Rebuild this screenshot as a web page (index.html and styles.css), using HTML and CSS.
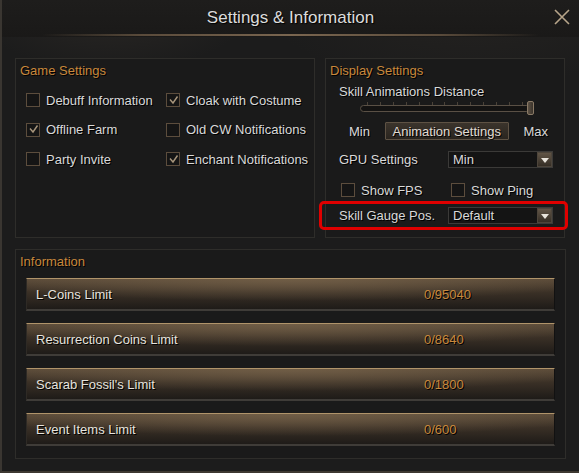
FILE: index.html
```html
<!DOCTYPE html>
<html>
<head>
<meta charset="utf-8">
<link rel="stylesheet" href="styles.css">
</head>
<body>
<div class="window">
  <header class="titlebar">
    <h1 class="title">Settings &amp; Information</h1>
    <svg class="close" width="16" height="16" viewBox="0 0 16 16"><path d="M1 1L15 15M15 1L1 15" stroke="#b7a58a" stroke-width="1.6"/></svg>
  </header>
  <main class="content">
    <div class="toprow">
      <section class="panel game">
        <h2 class="phead">Game Settings</h2>
        <div class="checks">
          <label class="cb"><span class="box"></span>Debuff Information</label>
          <label class="cb"><span class="box on"><svg width="11" height="11" viewBox="0 0 11 11"><path d="M2 4.5L5 8L9.5 1.5" fill="none" stroke="#a8967c" stroke-width="1.4"/></svg></span>Cloak with Costume</label>
          <label class="cb"><span class="box on"><svg width="11" height="11" viewBox="0 0 11 11"><path d="M2 4.5L5 8L9.5 1.5" fill="none" stroke="#a8967c" stroke-width="1.4"/></svg></span>Offline Farm</label>
          <label class="cb"><span class="box"></span>Old CW Notifications</label>
          <label class="cb"><span class="box"></span>Party Invite</label>
          <label class="cb"><span class="box on"><svg width="11" height="11" viewBox="0 0 11 11"><path d="M2 4.5L5 8L9.5 1.5" fill="none" stroke="#a8967c" stroke-width="1.4"/></svg></span>Enchant Notifications</label>
        </div>
      </section>
      <section class="panel display">
        <h2 class="phead">Display Settings</h2>
        <div class="dbody">
          <div class="lbl">Skill Animations Distance</div>
          <div class="slider">
            <div class="track">
              <span class="tick"></span><span class="tick"></span><span class="tick"></span><span class="tick"></span><span class="tick"></span><span class="tick"></span><span class="tick"></span><span class="tick"></span><span class="tick"></span><span class="tick"></span><span class="tick"></span><span class="tick"></span><span class="tick"></span>
            </div>
            <span class="thumb"></span>
          </div>
          <div class="minmax">
            <span>Min</span>
            <button class="btn">Animation Settings</button>
            <span>Max</span>
          </div>
          <div class="row gpu">
            <span class="lbl">GPU Settings</span>
            <div class="select"><span>Min</span><span class="arrow"></span></div>
          </div>
          <div class="row checks2">
            <label class="cb"><span class="box"></span>Show FPS</label>
            <label class="cb"><span class="box"></span>Show Ping</label>
          </div>
          <div class="row highlight">
            <span class="lbl">Skill Gauge Pos.</span>
            <div class="select"><span>Default</span><span class="arrow"></span></div>
          </div>
        </div>
      </section>
    </div>
    <section class="panel info">
      <h2 class="phead">Information</h2>
      <div class="bars">
        <div class="bar"><span class="bname">L-Coins Limit</span><span class="bval">0/95040</span></div>
        <div class="bar"><span class="bname">Resurrection Coins Limit</span><span class="bval">0/8640</span></div>
        <div class="bar"><span class="bname">Scarab Fossil's Limit</span><span class="bval">0/1800</span></div>
        <div class="bar"><span class="bname">Event Items Limit</span><span class="bval">0/600</span></div>
      </div>
    </section>
  </main>
</div>
</body>
</html>
```

FILE: styles.css
```css
* { box-sizing: border-box; }
html, body { margin: 0; padding: 0; }
body {
  width: 579px; height: 473px; overflow: hidden;
  background: #1b1b1b;
  font-family: "Liberation Sans", Arial, sans-serif;
  color: #d9d9d9;
  font-size: 13px;
}
.window {
  width: 579px; height: 473px;
  border-left: 2px solid #3a3631;
  border-bottom: 2px solid #3d3831;
  background:
    radial-gradient(ellipse 140px 60px at 110px 10px, rgba(80,70,60,0.25), transparent),
    radial-gradient(ellipse 200px 70px at 470px 15px, rgba(70,60,50,0.18), transparent),
    #1c1c1c;
}
.titlebar {
  height: 37px;
  position: relative;
  display: flex; align-items: center; justify-content: center;
  background: linear-gradient(#1e1d1c, #1a1918);
}
.titlebar::after {
  content: ""; position: absolute; left: 40px; right: 40px; bottom: 1px; height: 2px;
  background: linear-gradient(90deg, transparent, #5a4b3b 20%, #7a6650 50%, #5a4b3b 80%, transparent);
}
.title {
  margin: 0; font-weight: normal; font-size: 17px; color: #dcdcdc;
  text-shadow: 1px 1px 1px #000; padding-bottom: 1px;
}
.close { position: absolute; right: 9px; top: 9px; }
.content { padding: 21px 0 0 13px; }
.toprow { display: flex; gap: 10px; }
.panel { border: 1px solid #2e2d2a; background: #1a1a1a; }
.phead {
  margin: 0; font-weight: normal; font-size: 13px; color: #c8883c;
  padding: 4px 0 0 4px; line-height: 16px; text-shadow: 1px 1px 0 #000;
}
.game { width: 300px; height: 180px; }
.checks {
  display: grid; grid-template-columns: 140px auto; row-gap: 13.5px;
  padding: 13px 0 0 10px;
}
.cb { display: flex; align-items: center; gap: 6px; height: 16px; text-shadow: 1px 1px 0 #000; white-space: nowrap; }
.box {
  width: 14px; height: 14px; border: 1px solid #5c4d3d; background: #151515;
  display: inline-flex; align-items: center; justify-content: center; flex: none;
}
.display { width: 240px; height: 180px; }
.dbody { padding: 5px 0 0 13px; }
.lbl { text-shadow: 1px 1px 0 #000; line-height: 16px; }
.slider { position: relative; height: 16px; margin: 0 0 0 21px; width: 174px; }
.track {
  position: absolute; left: 0; right: 4px; top: 5px; height: 7px;
  border: 1px solid #5a5045; border-radius: 4px; background: #141312;
  display: flex; justify-content: space-between; padding: 0 6px;
}
.tick { width: 1px; height: 3px; background: #4a4238; margin-top: -4px; }
.thumb {
  position: absolute; right: 0; top: 1px; width: 7px; height: 14px;
  border: 1px solid #8a7a66; border-radius: 2px;
  background: linear-gradient(90deg, #5d5245, #3a332b);
}
.minmax { display: flex; align-items: center; justify-content: space-between; width: 199px; margin: 6px 0 0 10px; text-shadow: 1px 1px 0 #000; }
.btn {
  font: inherit; color: #e0dcd4; text-shadow: 1px 1px 0 #000;
  height: 18px; width: 124px; padding: 0;
  border: 1px solid #5e5244; border-radius: 1px;
  background: linear-gradient(#3b342c, #2a251f);
}
.row { display: flex; align-items: center; }
.row .lbl { width: 109px; }
.gpu { margin-top: 11px; }
.select {
  width: 105px; height: 17px; border: 1px solid #3b3a38; background: #141414;
  display: flex; align-items: center; justify-content: space-between;
  padding-left: 4px; text-shadow: 1px 1px 0 #000;
}
.arrow {
  width: 15px; height: 15px; position: relative;
  border: 1px solid #4d453b;
  background: linear-gradient(#615546, #352e26);
}
.arrow::after {
  content: ""; position: absolute; left: 3px; top: 5px;
  border-left: 4px solid transparent; border-right: 4px solid transparent;
  border-top: 5px solid #e8e4dc;
}
.checks2 { margin-top: 14px; margin-left: 2px; gap: 0; }
.checks2 .cb { width: 110px; }
.highlight {
  margin: 3px 0 0 -20px; width: 249px; height: 29px;
  border: 3px solid #e00000; border-radius: 5px;
  padding-left: 17px;
}
.info { width: 551px; height: 210px; margin-top: 11px; }
.bars { display: flex; flex-direction: column; gap: 12px; padding: 8px 0 0 10px; }
.bar {
  width: 529px; height: 33px; display: flex; align-items: center;
  padding-left: 9px; position: relative;
  border-top: 1px solid #b0946a; border-bottom: 2px solid #3f3c38;
  border-left: 1px solid #2e2a25; border-right: 1px solid #111;
  background:
    radial-gradient(ellipse 320px 22px at 50% 0, rgba(120,100,75,0.75), transparent),
    linear-gradient(#5a4a38, #3a3026 45%, #1e1b18);
  text-shadow: 1px 1px 0 #000;
}
.bname { width: 388px; color: #e6e3de; }
.bval { color: #c8883c; }
```
